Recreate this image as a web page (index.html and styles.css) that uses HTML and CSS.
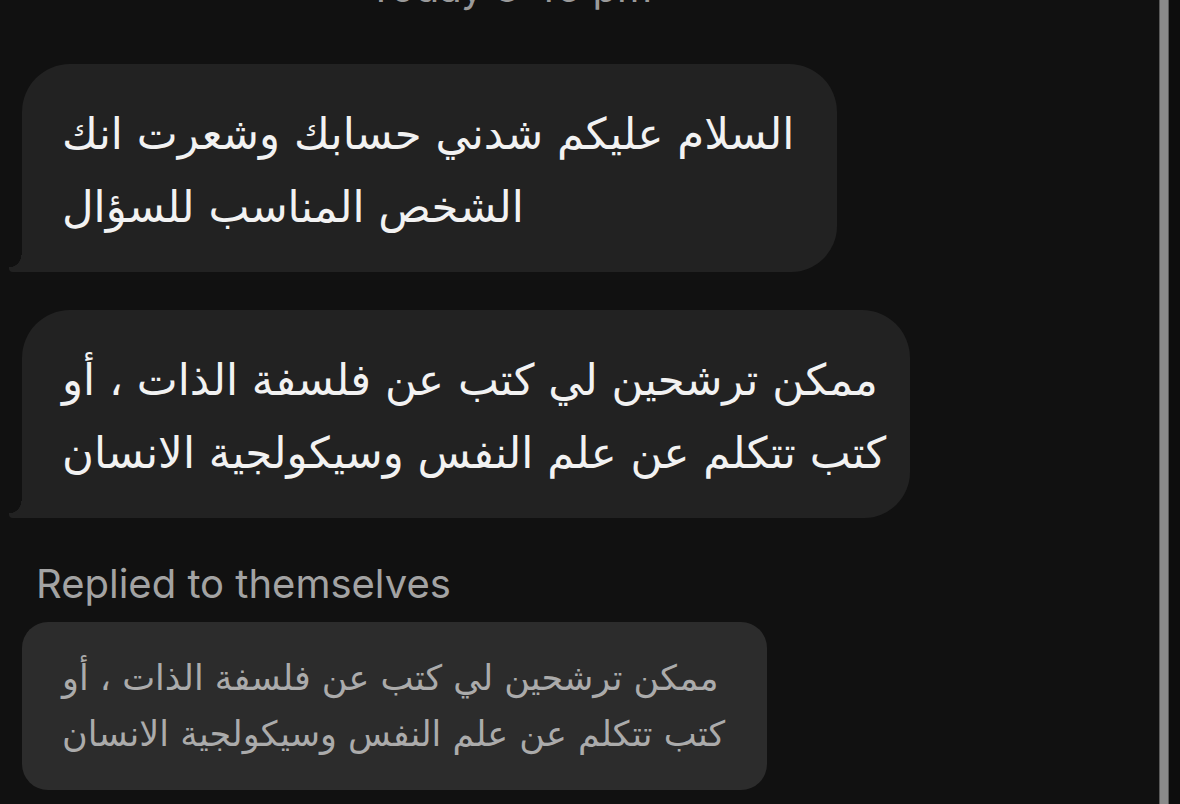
FILE: index.html
```html
<!DOCTYPE html>
<html>
	<head>
		<meta charset="utf-8">
		<title>Chat</title>
		<link rel="stylesheet" href="styles.css">
	</head>
	<body>
		<div class="screen">
			<!-- 聊天区 -->
			<div class="chat">
				<div class="stamp">Today 3:45 pm</div>
				<div class="msg">السلام عليكم شدني حسابك وشعرت انك<br>الشخص المناسب للسؤال</div>
				<div class="msg">ممكن ترشحين لي كتب عن فلسفة الذات ، أو<br>كتب تتكلم عن علم النفس وسيكولجية الانسان</div>
				<div class="reply-label">Replied to themselves</div>
				<div class="quote">ممكن ترشحين لي كتب عن فلسفة الذات ، أو<br>كتب تتكلم عن علم النفس وسيكولجية الانسان</div>
			</div>
			<!-- 右侧滚动条 -->
			<div class="scroll"></div>
			<div class="edge"></div>
		</div>
	</body>
</html>
```

FILE: styles.css
```css
html, body {
	margin: 0;
	height: 100%;
	background: #111111;
	overflow: hidden;
}

.screen {
	display: flex;
	height: 804px;
}

/* 聊天区 */
.chat {
	flex: 1;
	display: flex;
	flex-direction: column;
	align-items: flex-start;
	padding-left: 22px;
}

.stamp {
	margin-top: -32px;
	margin-left: 346px;
	height: 40px;
	line-height: 40px;
	font-family: "Inter", "Liberation Sans", sans-serif;
	font-size: 40px;
	color: #9a9a9a;
}

.msg {
	position: relative;
	direction: ltr;
	text-align: left;
	white-space: nowrap;
	margin-top: 56px;
	padding: 34px 43px 28px 40px;
	background: #222222;
	border-radius: 48px 48px 46px 0;
	font-family: "DejaVu Sans", sans-serif;
	font-size: 43.5px;
	line-height: 73px;
	color: #f2f2f2;
}

.msg + .msg {
	margin-top: 38px;
	padding-right: 24px;
}

/* 气泡尾巴 */
.msg::before {
	content: "";
	position: absolute;
	left: -13px;
	bottom: 0;
	width: 14px;
	height: 17px;
	border-bottom-left-radius: 4px;
	background: radial-gradient(circle at 0 0, transparent 12px, #222222 12.5px);
}

.reply-label {
	margin-top: 42px;
	margin-left: 14px;
	font-family: "Inter", "Liberation Sans", sans-serif;
	font-size: 40px;
	line-height: 48px;
	color: #a3a3a3;
}

.quote {
	direction: ltr;
	text-align: left;
	white-space: nowrap;
	margin-top: 14px;
	padding: 28px 42px 28px 40px;
	background: #2c2c2c;
	border-radius: 26px;
	font-family: "DejaVu Sans", sans-serif;
	font-size: 35px;
	line-height: 56px;
	color: #ababab;
}

/* 右侧滚动条 */
.scroll {
	width: 8px;
	background: #8a8a8a;
	border-left: 1px solid #5a5a5a;
	border-right: 1px solid #5a5a5a;
}

.edge {
	width: 11px;
	background: #0d0d0d;
}
```
